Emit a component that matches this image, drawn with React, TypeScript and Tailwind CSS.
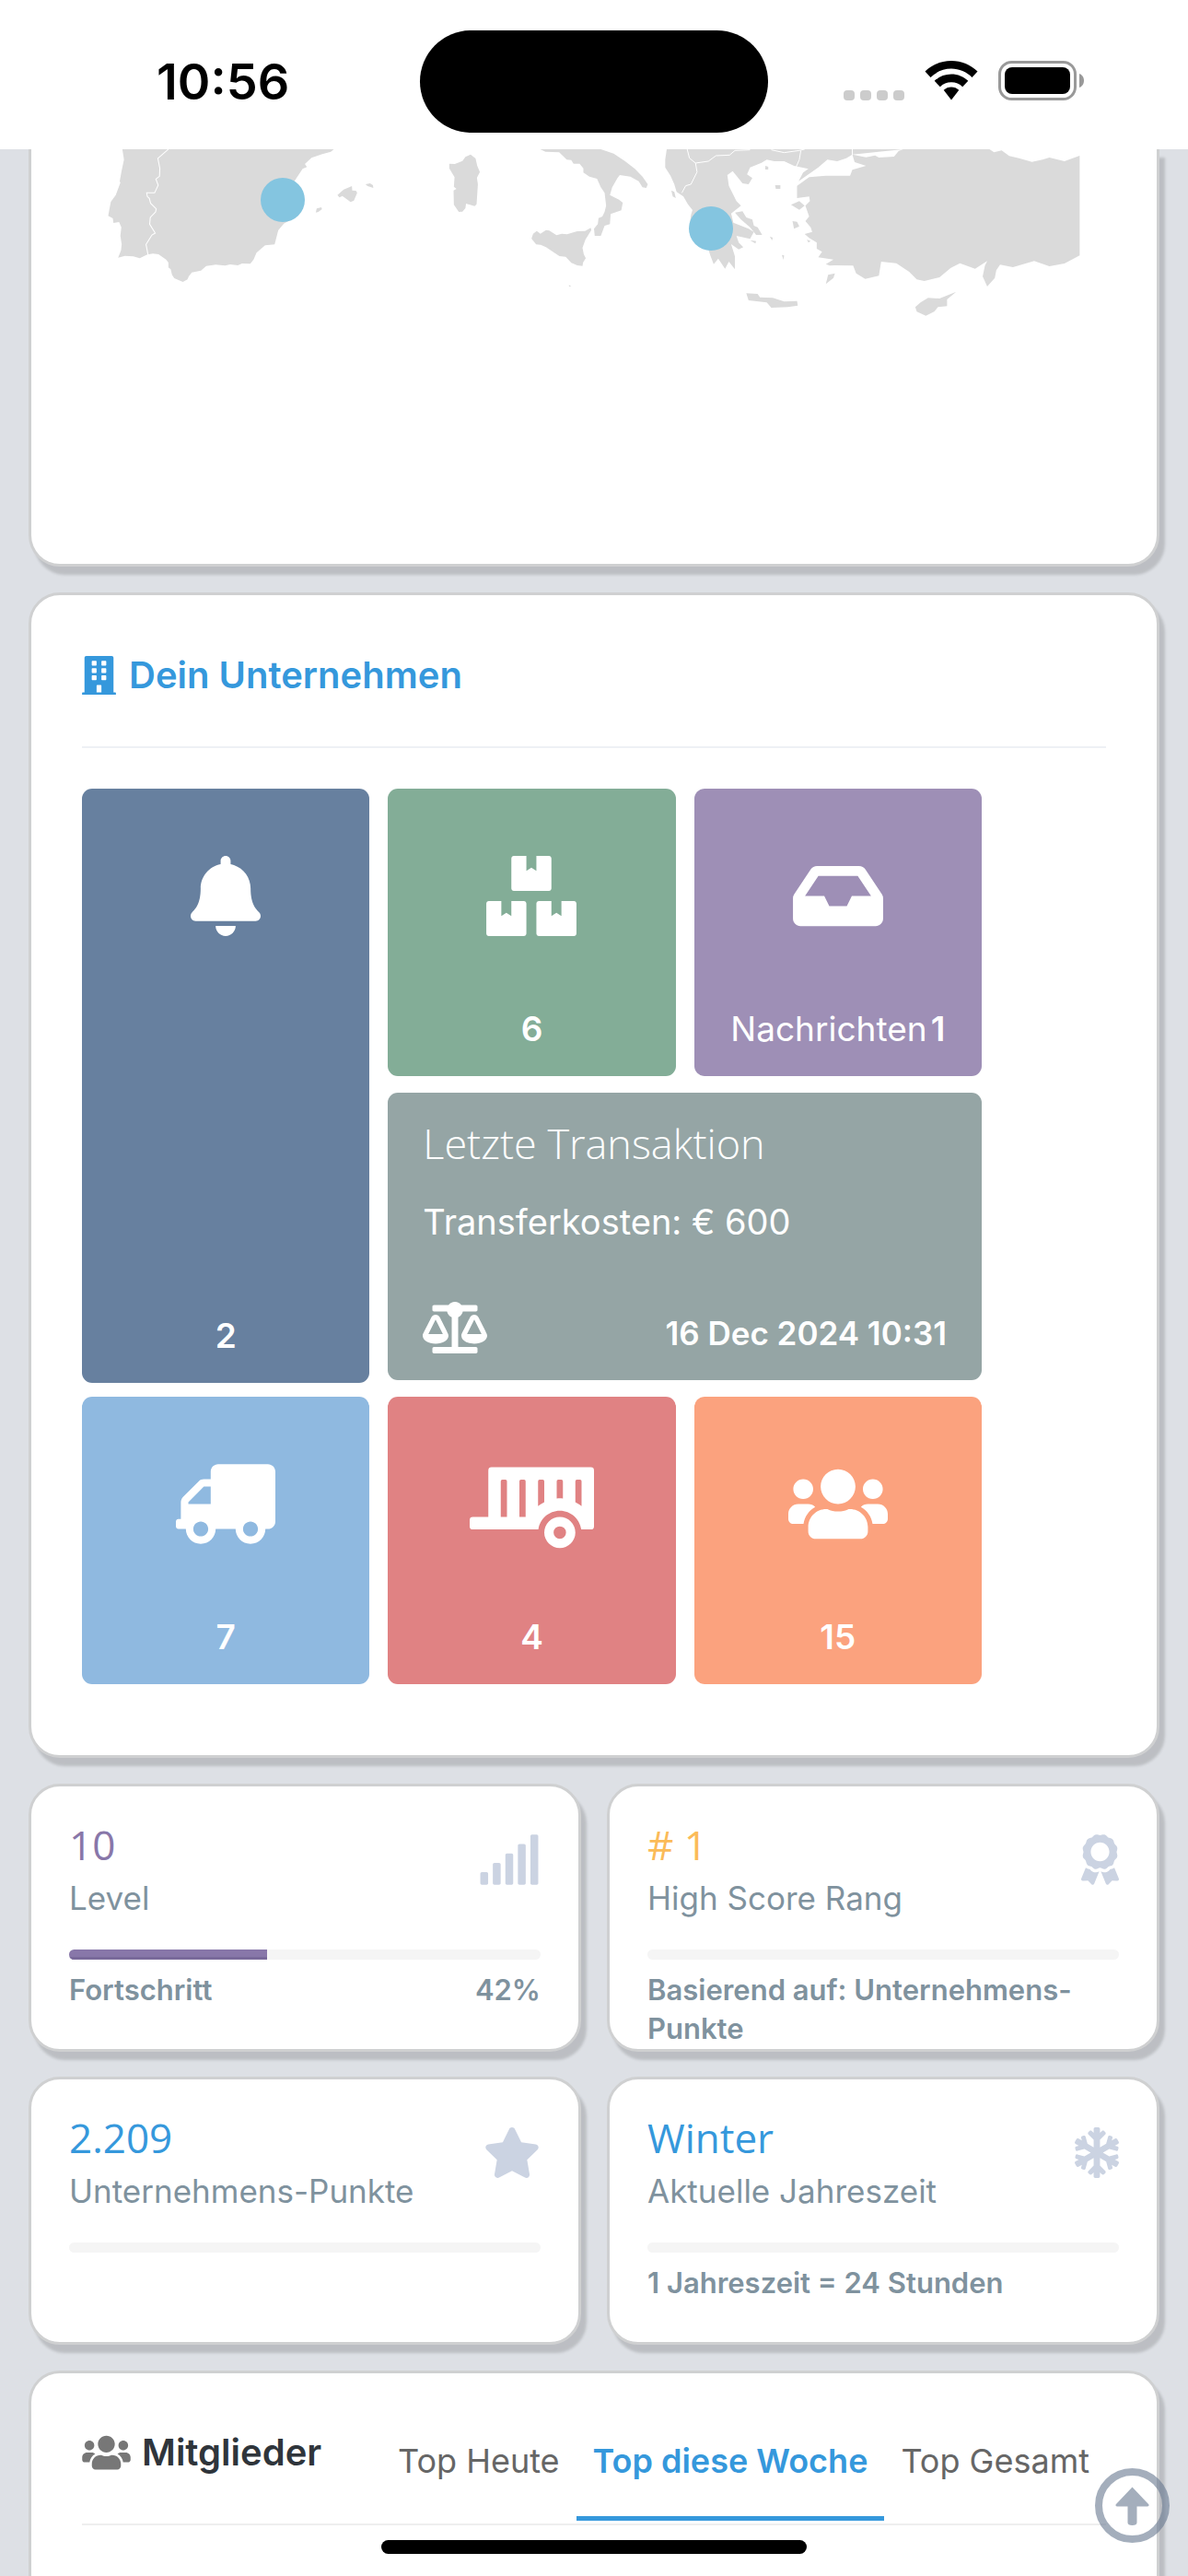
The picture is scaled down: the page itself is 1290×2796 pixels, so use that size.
import type { ReactNode } from "react";
import type { IconType } from "react-icons";
import {
  FaAward,
  FaBalanceScale,
  FaBell,
  FaBoxes,
  FaBuilding,
  FaInbox,
  FaSignal,
  FaSnowflake,
  FaStar,
  FaTrailer,
  FaTruck,
  FaUsers,
} from "react-icons/fa";

const CARD =
  "rounded-[34px] border-[3px] border-[#cfd0d1] bg-white shadow-[6px_9px_3px_rgba(0,0,0,0.15)]";

function StatusBar() {
  return (
    <header className="relative flex h-[162px] items-center justify-between bg-white pr-[112px] pl-[170px]">
      <time className="pt-4 text-[54px] leading-none font-semibold text-black">10:56</time>
      <div className="absolute top-[33px] left-1/2 h-[111px] w-[378px] -translate-x-1/2 rounded-full bg-black" />
      <div className="flex items-center gap-[22px] pt-3">
        <div className="flex gap-[6px] self-end">
          {[0, 1, 2, 3].map((n) => (
            <span key={n} className="h-[11px] w-3 rounded-[4px] bg-[#cccccc]" />
          ))}
        </div>
        <svg className="h-[43px] w-[58px]" viewBox="0 0 58 43" aria-label="WLAN">
          <path d="M29 0C40 0 50 4.300 57.500 11.500L51.500 18C45.500 12 37.500 8.600 29 8.600S12.500 12 6.500 18L.5 11.500C8 4.300 18 0 29 0Z" />
          <path d="M29 14.500C36 14.500 42.500 17.200 47.300 21.800L41.200 28.200C38 25 33.700 23.200 29 23.200S20 25 16.800 28.200L10.700 21.800C15.500 17.200 22 14.500 29 14.500Z" />
          <path d="M29 28.500C32.200 28.500 35 29.700 37.300 31.800L29 42.500L20.700 31.800C23 29.700 25.800 28.500 29 28.500Z" />
        </svg>
        <svg className="h-[43px] w-[94px]" viewBox="0 0 94 43" aria-label="Batterie">
          <rect x="1.500" y="1.500" width="82" height="40" rx="13" fill="none" stroke="#999" strokeWidth="3" />
          <rect x="7" y="7" width="71" height="29" rx="8" />
          <path d="M88 14C91 15 93 18 93 21.500S91 28 88 29Z" fill="#999" />
        </svg>
      </div>
    </header>
  );
}

function MapCard() {
  return (
    <section className="flex h-[453px] flex-col rounded-b-[34px] border-x-[3px] border-b-[3px] border-[#cfd0d1] bg-white shadow-[6px_9px_3px_rgba(0,0,0,0.15)]">
      <svg className="w-full" viewBox="34 162 1222 200" aria-label="Karte Südeuropa">
        <g transform="translate(100 150) scale(.35714 .33333)" fill="#dadada">
          <path d="M92 36 97 70 90 105 84 140 86 145 72 185 57 207 52 235 49 253 63 261 65 276 82 273 89 290 86 318 90 345 88 365 79 389 100 383 125 385 145 391 168 379 185 376 202 378 225 395 232 405 232 421 239 427 243 445 250 456 276 468 290 460 294 450 303 437 331 431 347 416 376 412 404 415 420 411 443 414 456 408 481 409 491 395 500 373 526 349 555 346 560 325 566 300 583 278 600 268 615 140 640 100 653 94 647 84 667 64 700 52 726 44 735 36Z" />
          <path fill="none" stroke="#fff" strokeWidth="3" d="M232 36 200 66 206 98 205 124 194 133 201 153 190 178 166 178 168 190 174 196 178 212 195 230 193 240 177 258 175 280 192 309 182 315 164 346 170 379" />
          <path d="M680 242 683 229 697 225 699 231 688 240ZM746 185 765 167 790 156 791 170 802 171 806 178 796 203 786 208 761 188 752 193ZM831 150 845 147 854 153 855 162 838 156Z" />
          <path d="M1086 83 1103 84 1126 74 1135 61 1151 53 1166 66 1171 90 1179 110 1170 129 1173 150 1169 215 1163 221 1137 213 1135 228 1126 239 1115 240 1100 217 1099 170 1108 165 1100 158 1102 127 1086 98Z" />
          <path d="M1336 327 1341 311 1352 302 1363 311 1380 299 1390 301 1412 316 1428 311 1444 313 1475 303 1499 302 1516 292 1518 299 1500 330 1491 357 1495 378 1501 391 1493 404 1491 416 1475 414 1457 406 1440 386 1421 384 1380 355 1364 347 1350 346ZM1450 478 1457 483 1450 483Z" />
        </g>
        <g transform="scale(.8227 .33333)" fill="#dadada">
          <path d="M713 486 720 494 738 496 748 520 754 521 757 533 765 533 770 548 770 562 778 575 788 582 793 610 798 628 800 670 798 690 795 705 790 710 789 730 784 745 785 768 793 768 798 735 805 730 806 697 820 685 822 660 817 650 805 635 808 610 815 580 818 570 832 575 843 590 848 610 853 612 855 600 848 575 838 550 825 525 810 500 793 486Z" />
          <path d="M1125 503 1143 512 1155 506 1160 513 1180 510 1186 492 1192 486 1306 486 1312 496 1322 490 1332 508 1345 515 1362 527 1376 520 1385 513 1405 525 1425 507 1425 832 1405 858 1385 867 1365 850 1337 870 1320 862 1315 880 1313 905 1303 933 1297 900 1300 865 1303 850 1287 875 1267 857 1255 872 1240 903 1220 915 1210 910 1200 885 1183 857 1163 852 1160 898 1142 908 1130 890 1126 865 1102 864 1095 865 1090 860 1100 845 1080 838 1085 820 1078 810 1078 790 1068 775 1062 762 1072 755 1070 740 1063 720 1068 705 1063 670 1069 655 1068 640 1052 645 1052 605 1068 577 1090 572 1122 572 1125 553 1143 540 1128 528Z" />
          <path d="M880 486 878 520 878 545 885 572 890 600 893 625 902 640 908 665 914 684 912 700 910 740 935 812 938 835 942 860 948 842 957 875 962 852 970 877 970 835 965 795 975 812 981 805 975 790 972 768 990 778 995 755 988 745 968 725 965 695 978 670 972 655 962 605 960 570 967 557 972 572 980 597 988 600 993 580 986 568 990 545 1005 530 1012 520 1022 525 1035 525 1048 540 1067 550 1060 562 1054 590 1080 545 1092 520 1105 525 1117 515 1125 503 1192 486Z" />
          <path d="M970 692 980 688 985 708 993 715 995 735 1000 740 1006 765 998 765 990 740 978 715ZM985 955 1000 957 1003 968 1020 970 1035 982 1052 980 1053 995 1040 1000 1018 1002 1012 985 988 978ZM1208 1000 1215 985 1225 970 1240 972 1262 950 1250 975 1250 997 1238 1000 1233 1015 1222 1028 1210 1015ZM1090 925 1093 895 1102 890 1100 905ZM1044 667 1055 655 1062 670 1055 683ZM1046 720 1052 722 1055 737 1048 745ZM1010 540 1014 543 1014 552 1010 552ZM1023 603 1030 603 1030 615 1024 615ZM1065 780 1070 785 1067 790ZM1032 830 1035 832 1034 846ZM1016 770 1020 774 1019 783ZM886 620 890 625 892 645 888 640ZM990 782 998 785 997 793Z" />
          <path fill="none" stroke="#fff" vectorEffect="non-scaling-stroke" d="M907 486 910 515 918 531 935 525 945 507 963 505 970 490 990 488M918 531 920 560 912 600 905 605 900 628M1018 488 1035 497 1055 490 1062 486M1057 490 1055 520 1050 548M1125 486V505" />
        </g>
        <circle cx="307" cy="217" r="24" fill="#84c5e0" />
        <circle cx="772" cy="248" r="24" fill="#84c5e0" />
      </svg>
    </section>
  );
}

function Tile({
  icon: Icon,
  tone,
  value,
  label,
  iconClass,
}: {
  icon: IconType;
  tone: string;
  value: string;
  label?: string;
  iconClass: string;
}) {
  return (
    <a
      href="#tile"
      className={`flex flex-col items-center justify-between rounded-[11px] pb-[29px] text-white ${tone}`}
    >
      <span className="flex h-[233px] items-center">
        <Icon className={iconClass} />
      </span>
      <span className="flex items-baseline gap-1 text-[37px] leading-[44px]">
        {label && <span>{label}</span>}
        <span className="font-semibold">{value}</span>
      </span>
    </a>
  );
}

function TransactionTile() {
  return (
    <a
      href="#transaction"
      className="col-span-2 flex flex-col rounded-[11px] bg-[#95a5a5] px-[38px] pt-[26px] pb-[29px] text-white"
    >
      <span className="font-['Open_Sans',sans-serif] text-[45px] leading-[58px] font-light">
        Letzte Transaktion
      </span>
      <span className="mt-[34px] text-[38px] leading-[44px]">Transferkosten: € 600</span>
      <span className="mt-auto flex items-end justify-between">
        <FaBalanceScale className="h-[56px] w-[70px]" />
        <span className="text-[35px] leading-[44px] font-semibold">16 Dec 2024 10:31</span>
      </span>
    </a>
  );
}

function CompanyCard() {
  return (
    <section className={`${CARD} px-[55px] pt-[46px] pb-[77px]`}>
      <h2 className="flex h-[120px] items-start gap-[14px] border-b-2 border-[#eef1f5] pt-[16px] text-[40px] leading-[50px] font-semibold text-[#3598dc]">
        <FaBuilding className="mt-1 h-[42px] w-[37px]" />
        Dein Unternehmen
      </h2>
      <div className="mt-11 mr-[135px] grid grid-cols-3 grid-rows-[312px_312px_312px] gap-x-5 gap-y-[18px]">
        <Tile
          icon={FaBell}
          tone="row-span-2 -mb-[3px] bg-[#67809f]"
          value="2"
          iconClass="h-[87px] w-[76px]"
        />
        <Tile icon={FaBoxes} tone="bg-[#83ad97]" value="6" iconClass="h-[87px] w-[98px]" />
        <Tile
          icon={FaInbox}
          tone="bg-[#9e8fb6]"
          label="Nachrichten"
          value="1"
          iconClass="h-[87px] w-[98px]"
        />
        <TransactionTile />
        <Tile
          icon={FaTruck}
          tone="bg-[#8fb9e0]"
          value="7"
          iconClass="h-[87px] w-[108px] -scale-x-100"
        />
        <Tile
          icon={FaTrailer}
          tone="bg-[#e08283]"
          value="4"
          iconClass="h-[108px] w-[135px] -scale-x-100"
        />
        <Tile icon={FaUsers} tone="bg-[#fba27e]" value="15" iconClass="h-[87px] w-[108px]" />
      </div>
    </section>
  );
}

function StatCard({
  value,
  tone,
  label,
  icon: Icon,
  iconClass,
  progress = 0,
  children,
}: {
  value: string;
  tone: string;
  label: string;
  icon: IconType;
  iconClass: string;
  progress?: number;
  children?: ReactNode;
}) {
  return (
    <section className={`${CARD} h-[291px] overflow-hidden px-[41px] pt-[31px]`}>
      <div className="flex justify-between">
        <div>
          <p className={`font-['Open_Sans',sans-serif] text-[44px] leading-[64px] ${tone}`}>{value}</p>
          <p className="text-[35px] leading-[52px] text-[#7f929e]">{label}</p>
        </div>
        <Icon className={`mt-[21px] text-[#cbd3e2] ${iconClass}`} />
      </div>
      <div className="mt-[30px] h-[11px] overflow-hidden rounded-[6px] bg-[#f5f5f5]">
        <div
          className="h-full bg-[#8877a9] shadow-[inset_0_-3px_0_#79699a]"
          style={{ width: `${progress}%` }}
        />
      </div>
      <div className="mt-3 flex justify-between text-[31px] leading-[42px] font-semibold text-[#7f929e]">
        {children}
      </div>
    </section>
  );
}

function MembersCard() {
  return (
    <section className="h-[223px] rounded-t-[34px] border-x-[3px] border-t-[3px] border-[#cfd0d1] bg-white px-[55px] shadow-[6px_9px_3px_rgba(0,0,0,0.15)]">
      <div className="flex h-[165px] items-end justify-between border-b-2 border-[#eeeeee]">
        <h2 className="mb-[52px] flex items-center gap-3 text-[40px] leading-[50px] font-semibold text-[#2f353b]">
          <FaUsers className="h-[42px] w-[53px] text-[#777777]" />
          Mitglieder
        </h2>
        <nav className="mb-[3px] flex text-[36px] leading-[50px] text-[#666666]">
          <button className="border-b-[5px] border-transparent px-[18px] pb-[35px]">Top Heute</button>
          <button className="border-b-[5px] border-[#3598dc] px-[18px] pb-[35px] font-semibold text-[#3598dc]">
            Top diese Woche
          </button>
          <button className="border-b-[5px] border-transparent px-[18px] pb-[35px]">Top Gesamt</button>
        </nav>
      </div>
    </section>
  );
}

export default function App() {
  return (
    <div className="relative min-h-screen overflow-hidden bg-[#dde0e5] font-['Inter','Noto_Sans',sans-serif]">
      <StatusBar />
      <main className="flex flex-col gap-7 px-[31px]">
        <MapCard />
        <CompanyCard />
        <div className="grid grid-cols-2 gap-x-7 gap-y-[27px]">
          <StatCard
            value="10"
            tone="text-[#8877a9]"
            label="Level"
            icon={FaSignal}
            iconClass="h-[55px] w-[68px]"
            progress={42}
          >
            <span>Fortschritt</span>
            <span>42%</span>
          </StatCard>
          <StatCard
            value="# 1"
            tone="text-[#fbbb58]"
            label="High Score Rang"
            icon={FaAward}
            iconClass="h-[55px] w-[41px]"
          >
            <span>
              Basierend auf: Unternehmens-
              <br />
              Punkte
            </span>
          </StatCard>
          <StatCard
            value="2.209"
            tone="text-[#3598dc]"
            label="Unternehmens-Punkte"
            icon={FaStar}
            iconClass="h-[55px] w-[62px]"
          />
          <StatCard
            value="Winter"
            tone="text-[#3598dc]"
            label="Aktuelle Jahreszeit"
            icon={FaSnowflake}
            iconClass="h-[55px] w-[48px]"
          >
            <span>1 Jahreszeit = 24 Stunden</span>
          </StatCard>
        </div>
        <MembersCard />
      </main>
      <button aria-label="Nach oben" className="absolute right-5 bottom-9 opacity-60">
        <svg className="size-[81px]" viewBox="0 0 81 81" fill="#687991">
          <circle cx="40.500" cy="40.500" r="36.500" fill="none" stroke="#687991" strokeWidth="8" />
          <path d="M40.500 20.500 58.500 39.500Q59 41.500 57 41.500H45.500V59Q45.500 62 40.500 62T35.500 59V41.500H24Q22 41.500 22.500 39.500Z" />
        </svg>
      </button>
      <div className="absolute bottom-6 left-1/2 h-[15px] w-[462px] -translate-x-1/2 rounded-full bg-black" />
    </div>
  );
}
